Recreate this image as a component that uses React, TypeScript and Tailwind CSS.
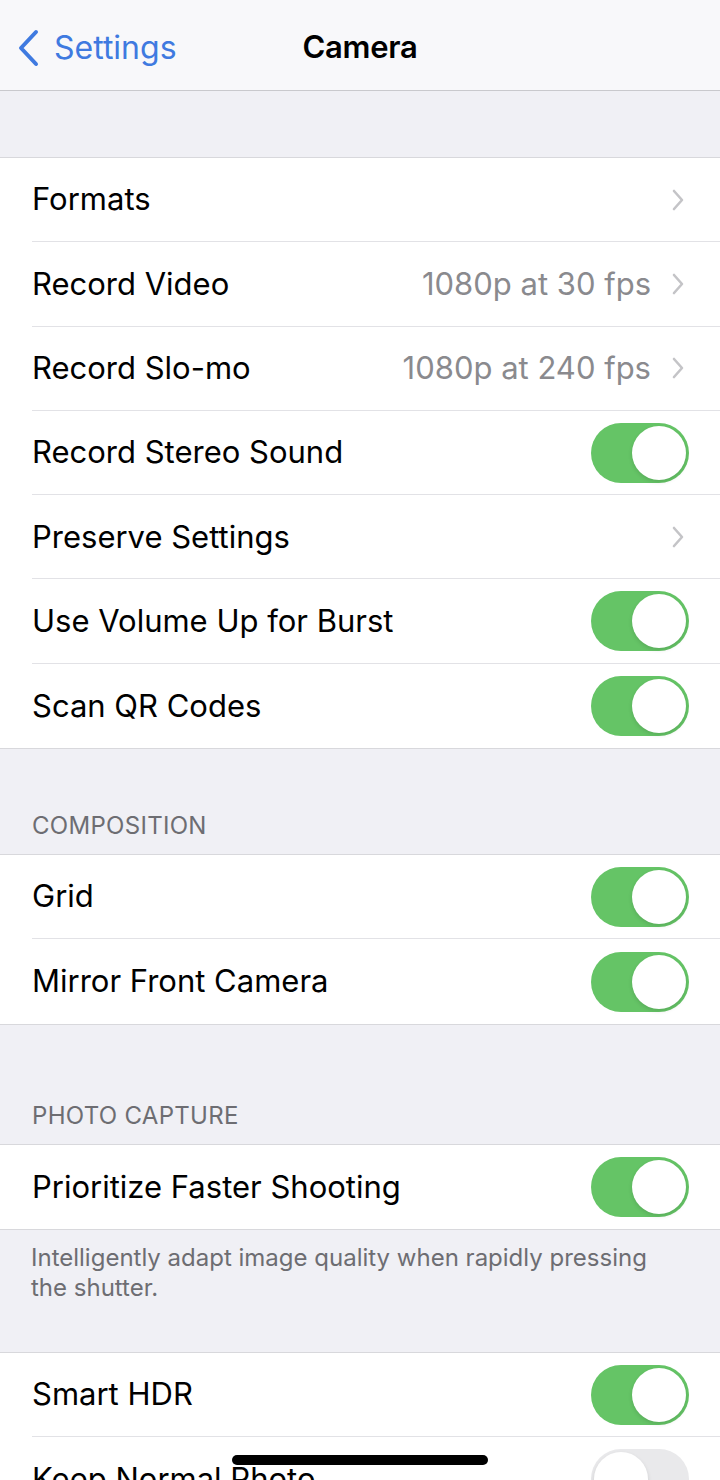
import React from "react";

const Chevron = () => (
  <svg width="14" height="24" viewBox="0 0 14 24" className="ml-[20px] mr-[4px]">
    <path d="M3 3 L11 12 L3 21" fill="none" stroke="#c4c4c7" strokeWidth="2.6" strokeLinecap="round" strokeLinejoin="round" />
  </svg>
);

const Toggle = ({ on = true }: { on?: boolean }) => (
  <div
    className={`w-[98px] h-[60px] rounded-full flex items-center p-[3px] ${on ? "bg-[#65c466] justify-end" : "bg-[#e9e9eb] justify-start"}`}
  >
    <div className="w-[54px] h-[54px] rounded-full bg-white shadow-[0_2px_4px_rgba(0,0,0,0.12)]" />
  </div>
);

type Row = { label: string; value?: string; chevron?: boolean; toggle?: boolean; off?: boolean };

const Group = ({ rows }: { rows: Row[] }) => (
  <div className="bg-white border-y border-[#d8d8dc]">
    {rows.map((r, i) => (
      <div key={i} className="pl-[32px]">
        <div
          className={`h-[84.3px] flex items-center pr-[31px] ${i < rows.length - 1 ? "border-b border-[#e2e2e6]" : ""}`}
        >
          <span className="flex-1 text-[31px] text-black">{r.label}</span>
          {r.value && <span className="text-[31px] text-[#8a8a8e]">{r.value}</span>}
          {r.chevron && <Chevron />}
          {r.toggle && <Toggle on={!r.off} />}
        </div>
      </div>
    ))}
  </div>
);

const Header = ({ text, h }: { text: string; h: string }) => (
  <div className={`${h} flex items-end pl-[32px] pb-[10px] text-[24px] text-[#6d6d72] tracking-[0.3px]`}>{text}</div>
);

export default function App() {
  return (
    <div className="w-[720px] h-[1480px] overflow-hidden bg-[#f0f0f5] relative" style={{ fontFamily: "Inter, 'Noto Sans', sans-serif" }}>
      <div className="h-[91px] bg-[#f8f8fa] border-b border-[#c9c9cd] flex items-center relative pt-[5px]">
        <div className="flex items-center pl-[17px]">
          <svg width="24" height="38" viewBox="0 0 24 38">
            <path d="M19 3 L4 19 L19 35" fill="none" stroke="#3f7ae0" strokeWidth="4" strokeLinecap="round" strokeLinejoin="round" />
          </svg>
          <span className="ml-[13px] text-[32px] text-[#3f7ae0]">Settings</span>
        </div>
        <div className="absolute left-0 right-0 text-center text-[31px] font-semibold text-black tracking-[-0.3px] pointer-events-none">Camera</div>
      </div>
      <div className="h-[66px]" />
      <Group
        rows={[
          { label: "Formats", chevron: true },
          { label: "Record Video", value: "1080p at 30 fps", chevron: true },
          { label: "Record Slo-mo", value: "1080p at 240 fps", chevron: true },
          { label: "Record Stereo Sound", toggle: true },
          { label: "Preserve Settings", chevron: true },
          { label: "Use Volume Up for Burst", toggle: true },
          { label: "Scan QR Codes", toggle: true },
        ]}
      />
      <Header text="COMPOSITION" h="h-[105px]" />
      <Group
        rows={[
          { label: "Grid", toggle: true },
          { label: "Mirror Front Camera", toggle: true },
        ]}
      />
      <Header text="PHOTO CAPTURE" h="h-[119px]" />
      <Group rows={[{ label: "Prioritize Faster Shooting", toggle: true }]} />
      <div className="h-[122px] pl-[31px] pr-[50px] pt-[13px] text-[24px] leading-[30px] text-[#6d6d72]">
        Intelligently adapt image quality when rapidly pressing the shutter.
      </div>
      <Group
        rows={[
          { label: "Smart HDR", toggle: true },
          { label: "Keep Normal Photo", toggle: true, off: true },
        ]}
      />
      <div className="absolute left-[232px] top-[1455px] w-[256px] h-[10px] rounded-full bg-black" />
    </div>
  );
}
